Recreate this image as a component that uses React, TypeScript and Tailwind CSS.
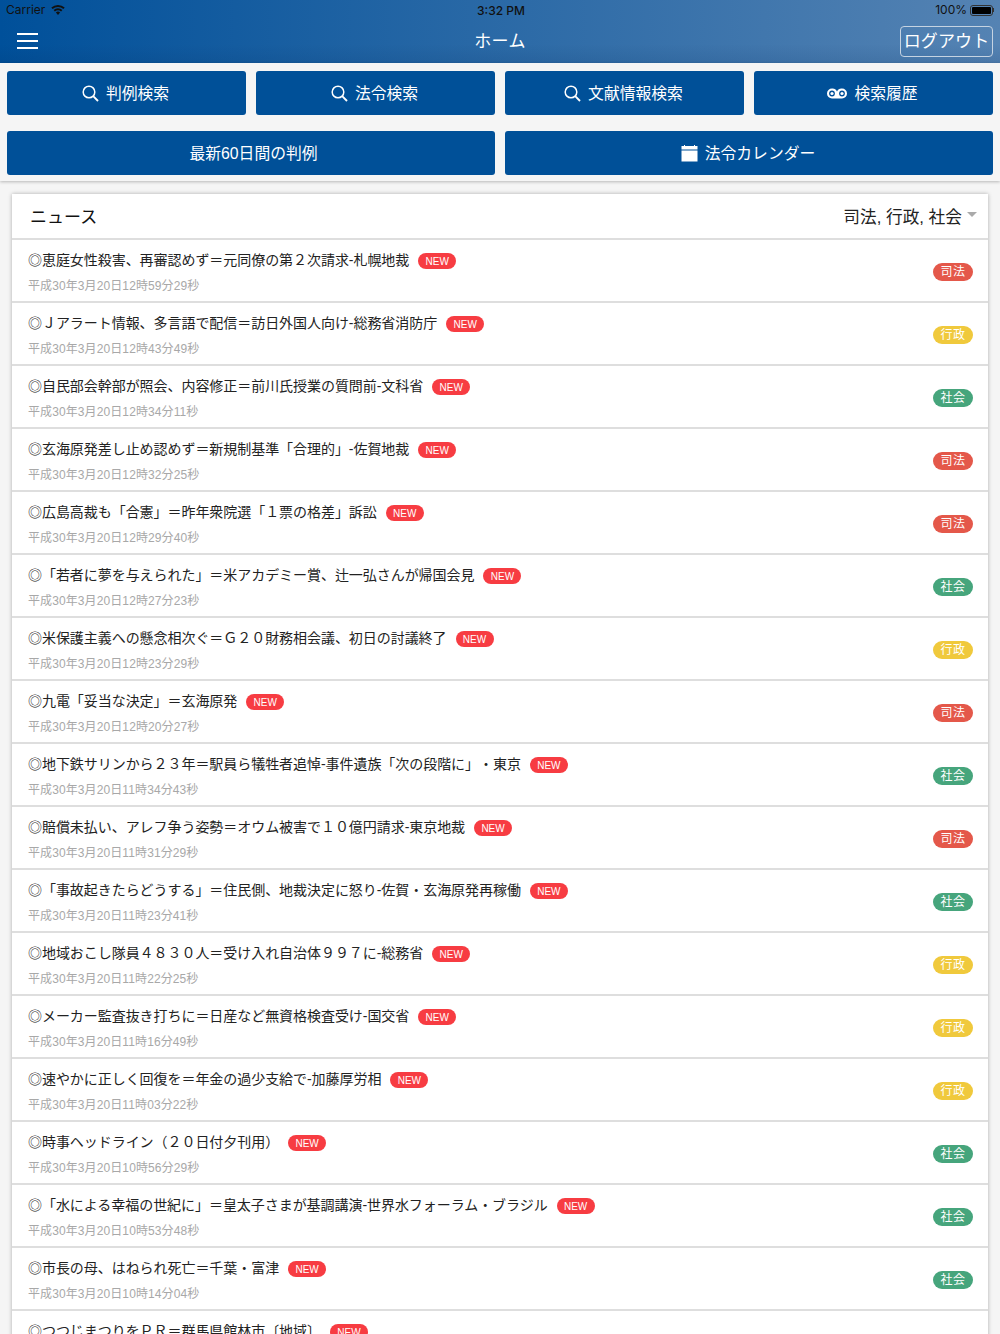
import React from "react";

type Cat = "司法" | "行政" | "社会";
const rows: [string, string, Cat][] = [
  ["◎恵庭女性殺害、再審認めず＝元同僚の第２次請求-札幌地裁", "平成30年3月20日12時59分29秒", "司法"],
  ["◎Ｊアラート情報、多言語で配信＝訪日外国人向け-総務省消防庁", "平成30年3月20日12時43分49秒", "行政"],
  ["◎自民部会幹部が照会、内容修正＝前川氏授業の質問前-文科省", "平成30年3月20日12時34分11秒", "社会"],
  ["◎玄海原発差し止め認めず＝新規制基準「合理的」-佐賀地裁", "平成30年3月20日12時32分25秒", "司法"],
  ["◎広島高裁も「合憲」＝昨年衆院選「１票の格差」訴訟", "平成30年3月20日12時29分40秒", "司法"],
  ["◎「若者に夢を与えられた」＝米アカデミー賞、辻一弘さんが帰国会見", "平成30年3月20日12時27分23秒", "社会"],
  ["◎米保護主義への懸念相次ぐ＝Ｇ２０財務相会議、初日の討議終了", "平成30年3月20日12時23分29秒", "行政"],
  ["◎九電「妥当な決定」＝玄海原発", "平成30年3月20日12時20分27秒", "司法"],
  ["◎地下鉄サリンから２３年＝駅員ら犠牲者追悼-事件遺族「次の段階に」・東京", "平成30年3月20日11時34分43秒", "社会"],
  ["◎賠償未払い、アレフ争う姿勢＝オウム被害で１０億円請求-東京地裁", "平成30年3月20日11時31分29秒", "司法"],
  ["◎「事故起きたらどうする」＝住民側、地裁決定に怒り-佐賀・玄海原発再稼働", "平成30年3月20日11時23分41秒", "社会"],
  ["◎地域おこし隊員４８３０人＝受け入れ自治体９９７に-総務省", "平成30年3月20日11時22分25秒", "行政"],
  ["◎メーカー監査抜き打ちに＝日産など無資格検査受け-国交省", "平成30年3月20日11時16分49秒", "行政"],
  ["◎速やかに正しく回復を＝年金の過少支給で-加藤厚労相", "平成30年3月20日11時03分22秒", "行政"],
  ["◎時事ヘッドライン（２０日付夕刊用）", "平成30年3月20日10時56分29秒", "社会"],
  ["◎「水による幸福の世紀に」＝皇太子さまが基調講演-世界水フォーラム・ブラジル", "平成30年3月20日10時53分48秒", "社会"],
  ["◎市長の母、はねられ死亡＝千葉・富津", "平成30年3月20日10時14分04秒", "社会"],
  ["◎つつじまつりをＰＲ＝群馬県館林市〔地域〕", "平成30年3月20日10時09分58秒", "社会"],
];

const catClass: Record<Cat, string> = {
  司法: "bg-[#e4584a]",
  行政: "bg-[#f0c93c]",
  社会: "bg-[#46a57c]",
};

function SearchIcon() {
  return (
    <svg width="17" height="17" viewBox="0 0 17 17" fill="none" stroke="currentColor" strokeWidth="1.5">
      <circle cx="7" cy="7" r="5.8" />
      <path d="M11.2 11.2L16 16" strokeWidth="1.9" />
    </svg>
  );
}

function TapeIcon() {
  return (
    <svg width="20" height="11" viewBox="0 0 20 11">
      <path d="M5 .5a5 5 0 0 1 5 3 5 5 0 0 1 5-3 5 5 0 0 1 0 10H5a5 5 0 0 1 0-10z" fill="#fff" />
      <circle cx="5" cy="5.5" r="2.9" fill="#00509a" />
      <circle cx="5" cy="5.5" r="1.6" fill="#fff" />
      <circle cx="15" cy="5.5" r="2.9" fill="#00509a" />
      <circle cx="15" cy="5.5" r="1.6" fill="#fff" />
    </svg>
  );
}

function CalendarIcon() {
  return (
    <svg width="17" height="17" viewBox="0 0 17 17" fill="#fff">
      <rect x="0.5" y="1" width="16" height="3.5" />
      <rect x="0.5" y="5.5" width="16" height="11" />
      <rect x="3" y="0" width="1" height="2" />
      <rect x="13" y="0" width="1" height="2" />
    </svg>
  );
}

function Btn({ icon, label }: { icon?: React.ReactNode; label: string }) {
  return (
    <button className="h-11 flex-1 rounded-[3px] bg-[#005098] text-white flex items-center justify-center gap-[7px] pr-[2px] text-[15.8px] leading-6">
      {icon}
      <span className="pt-[1px]">{label}</span>
    </button>
  );
}

export default function App() {
  return (
    <div
      className="w-[1000px] h-[1334px] overflow-hidden bg-[#f5f5f5] flex flex-col [text-spacing-trim:space-all]"
      style={{ fontFamily: '"Liberation Sans", "Noto Sans CJK JP", sans-serif' }}
    >
      <header className="h-[63px] shrink-0 bg-[linear-gradient(to_bottom,transparent_70%,rgba(0,40,90,0.12)),linear-gradient(to_right,#00509a,#5583b3)] flex flex-col">
        <div className="h-5 relative flex items-center justify-between px-[6px] text-[12px] text-[#111] font-['Inter']">
          <div className="flex items-center gap-[6px]">
            <span>Carrier</span>
            <svg width="14" height="10" viewBox="0 0 14 10" fill="#111">
              <path d="M7 10L4.9 7.6a3 3 0 0 1 4.2 0zM3.9 6.5L2.6 5a6.6 6.6 0 0 1 8.8 0l-1.3 1.5a4.7 4.7 0 0 0-6.2 0zM1.6 4L0.3 2.6a10 10 0 0 1 13.4 0L12.4 4a8.1 8.1 0 0 0-10.8 0z" />
            </svg>
          </div>
          <span className="absolute left-[477px] top-[2px] font-medium text-[12px]">3:32 PM</span>
          <div className="flex items-center gap-[3px]">
            <span>100%</span>
            <span className="w-[23px] h-[11px] rounded-[3px] border border-[#333] p-[1px] block">
              <span className="block w-full h-full bg-black rounded-[1px]" />
            </span>
            <span className="block w-[1px] h-[4px] bg-[#333] -ml-[3px]" />
          </div>
        </div>
        <div className="flex-1 relative flex items-center justify-between pl-[17px] pr-[7px]">
          <div className="flex flex-col gap-[5px] mb-[2px]">
            <span className="block w-[21px] h-[2px] bg-white" />
            <span className="block w-[21px] h-[2px] bg-white" />
            <span className="block w-[21px] h-[2px] bg-white" />
          </div>
          <span className="absolute left-0 right-0 text-center text-white text-[17px] tracking-[0.4px] pointer-events-none">ホーム</span>
          <span className="w-[93px] h-[31px] mb-[1px] pt-[1px] border border-[#c5d3e2] rounded-[4px] text-white text-[17px] tracking-[0.1px] flex items-center justify-center">ログアウト</span>
        </div>
      </header>

      <div className="h-[118px] shrink-0 bg-[#f5f5f5] px-[7px] pt-2 flex flex-col gap-4 shadow-[0_1px_3px_rgba(0,0,0,0.25)]">
        <div className="flex gap-[10px]">
          <Btn icon={<SearchIcon />} label="判例検索" />
          <Btn icon={<SearchIcon />} label="法令検索" />
          <Btn icon={<SearchIcon />} label="文献情報検索" />
          <Btn icon={<TapeIcon />} label="検索履歴" />
        </div>
        <div className="flex gap-[10px]">
          <Btn icon={<span className="w-0" />} label="最新60日間の判例" />
          <Btn icon={<CalendarIcon />} label="法令カレンダー" />
        </div>
      </div>

      <main className="mx-3 mt-[13px] bg-white shadow-[0_0_4px_rgba(0,0,0,0.3)]">
        <div className="h-[46px] flex items-center justify-between pl-[18px] pr-[11px] pt-[3px] border-b-2 border-[#dedede]">
          <span className="text-[17px] text-[#111]">ニュース</span>
          <div className="flex items-center gap-[5px]">
            <span className="text-[16.7px] text-[#222]">司法, 行政, 社会</span>
            <span className="block w-0 h-0 border-x-[5px] border-x-transparent border-t-[5px] border-t-[#aaa] mb-[5px]" />
          </div>
        </div>
        {rows.map(([title, date, cat]) => (
          <div key={title} className="h-[63px] flex items-center justify-between pl-4 pr-[15px] pt-[2px] border-b-2 border-[#dedede]">
            <div className="flex flex-col pt-[1px]">
              <div className="flex items-center gap-[9px] h-5">
                <span className="text-[14px] text-[#222] tracking-[-0.05px]">{title}</span>
                <span className="w-[38px] h-4 mt-[1px] rounded-full bg-[#f73c42] text-white text-[10px] flex items-center justify-center">NEW</span>
              </div>
              <span className="mt-[7px] text-[12px] leading-4 tracking-[0.1px] text-[#a8a8a8]">{date}</span>
            </div>
            <span className={`w-10 h-[18px] rounded-full text-white text-[12px] tracking-[0.4px] flex items-center justify-center ${catClass[cat]}`}>{cat}</span>
          </div>
        ))}
      </main>
    </div>
  );
}
